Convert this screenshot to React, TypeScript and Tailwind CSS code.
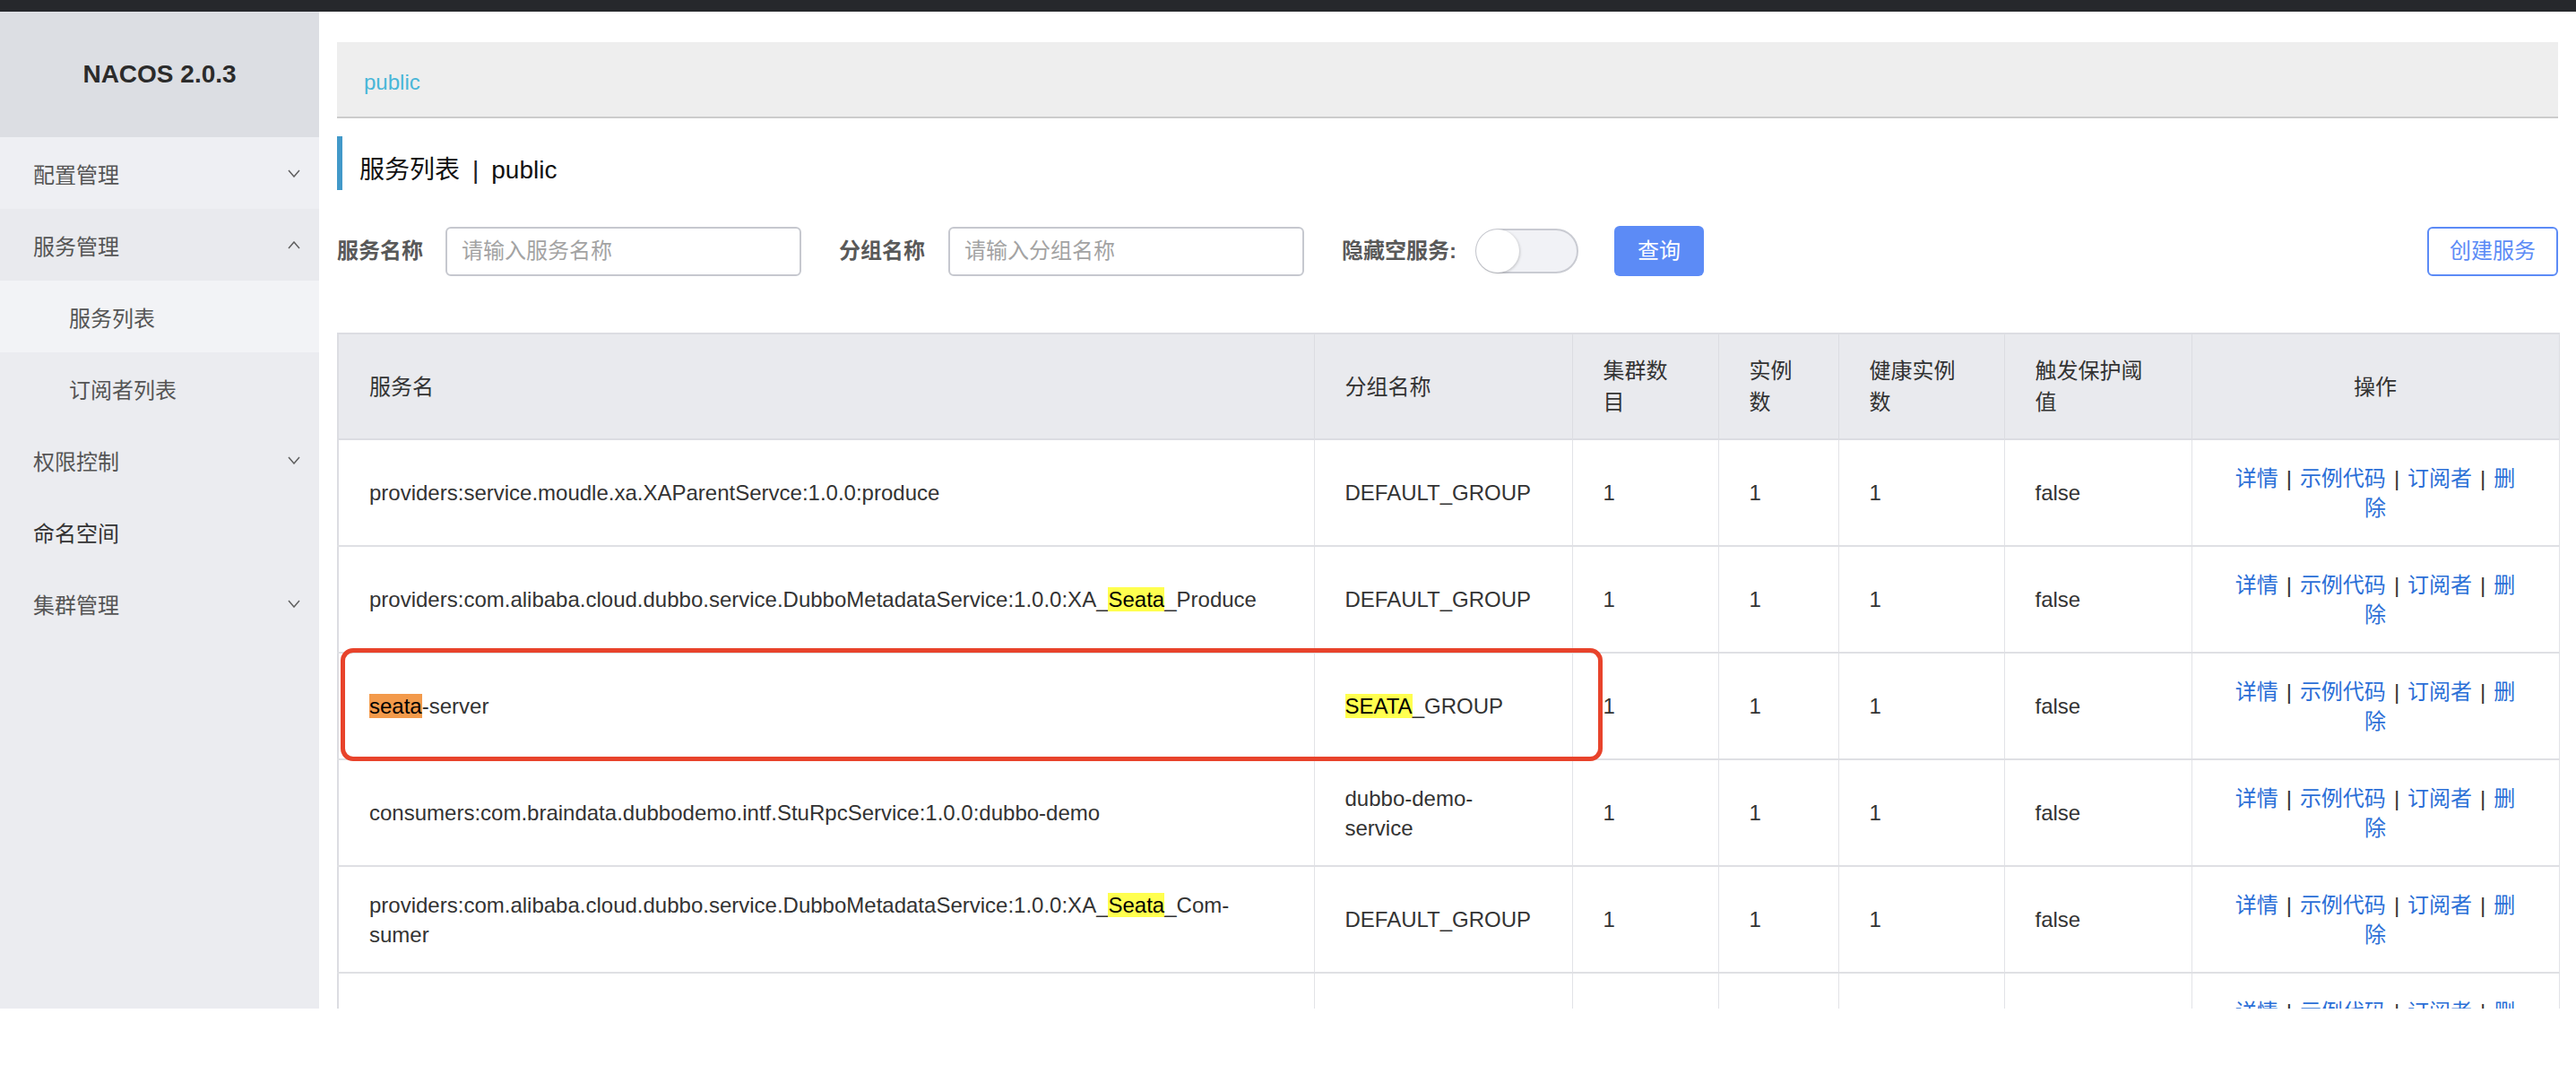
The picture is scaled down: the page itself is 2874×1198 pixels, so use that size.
import React from "react";

type Row = {
  name: React.ReactNode;
  group: React.ReactNode;
  cells?: boolean;
};

const rows: Row[] = [
  {
    name: "providers:service.moudle.xa.XAParentServce:1.0.0:produce",
    group: "DEFAULT_GROUP",
  },
  {
    name: (
      <>
        providers:com.alibaba.cloud.dubbo.service.DubboMetadataService:1.0.0:XA_
        <span className="bg-[#ffff4f] text-black">Seata</span>_Produce
      </>
    ),
    group: "DEFAULT_GROUP",
  },
  {
    name: (
      <>
        <span className="bg-[#f39a4b] text-black">seata</span>-server
      </>
    ),
    group: (
      <>
        <span className="bg-[#ffff4f] text-black">SEATA</span>_GROUP
      </>
    ),
  },
  {
    name: "consumers:com.braindata.dubbodemo.intf.StuRpcService:1.0.0:dubbo-demo",
    group: (
      <>
        dubbo-demo-
        <br />
        service
      </>
    ),
  },
  {
    name: (
      <>
        providers:com.alibaba.cloud.dubbo.service.DubboMetadataService:1.0.0:XA_
        <span className="bg-[#ffff4f] text-black">Seata</span>_Com-
        <br />
        sumer
      </>
    ),
    group: "DEFAULT_GROUP",
  },
  // last row is cut by the window, only its links peek out
  { name: "", group: "", cells: false },
];

function Chevron({ up }: { up?: boolean }) {
  return (
    <svg width="14" height="9" viewBox="0 0 14 9" className="shrink-0">
      <polyline
        points={up ? "1,8 7,1 13,8" : "1,1 7,8 13,1"}
        fill="none"
        stroke="#5f5f5f"
        strokeWidth="1.5"
      />
    </svg>
  );
}

function MenuItem({
  label,
  bg,
  chevron,
  sub,
  dark,
}: {
  label: string;
  bg?: string;
  chevron?: "up" | "down";
  sub?: boolean;
  dark?: boolean;
}) {
  return (
    <div
      className={`h-[80px] flex items-center justify-between pr-[21px] ${
        sub ? "pl-[77px]" : "pl-[37px]"
      } ${bg ?? ""}`}
    >
      <span
        className={`text-[24px] pt-[5px] ${dark ? "text-[#333]" : "text-[#555]"}`}
      >
        {label}
      </span>
      {chevron && <Chevron up={chevron === "up"} />}
    </div>
  );
}

function Sep() {
  return <span className="mx-[9px] text-[#333]">|</span>;
}

function App() {
  const th =
    "px-[34px] text-left font-normal text-[24px] leading-[35px] text-[#333] bg-[#e9eaee] border-r border-r-[#dcdde2] border-b-2 border-b-[#dcdde2] align-middle";
  const td =
    "px-[34px] text-[24px] leading-[33px] text-[#333] border-r border-r-[#e2e3e7] border-b-2 border-b-[#dfe0e4] align-middle";

  return (
    <div className="w-[2874px] h-[1198px] bg-white font-['Liberation_Sans','Noto_Sans_CJK_SC',sans-serif]">
      <div className="h-[13px] bg-[#26282c]" />
      <div className="h-[1112px] flex overflow-hidden">
        <aside className="w-[356px] shrink-0 bg-[#ebecf0] flex flex-col">
          <div className="h-[140px] bg-[#dcdee3] flex items-center justify-center text-[28px] font-bold text-[#2b2b2b]">
            NACOS 2.0.3
          </div>
          <MenuItem label="配置管理" chevron="down" bg="bg-[#eeeff3]" />
          <MenuItem label="服务管理" chevron="up" bg="bg-[#e9eaee]" />
          <MenuItem label="服务列表" sub bg="bg-[#f2f3f6]" />
          <MenuItem label="订阅者列表" sub />
          <MenuItem label="权限控制" chevron="down" />
          <MenuItem label="命名空间" dark />
          <MenuItem label="集群管理" chevron="down" />
        </aside>

        <main className="flex-1 min-w-0 px-[20px] pt-[34px]">
          <div className="h-[85px] bg-[#eeeeee] border-b-2 border-[#cccccc] flex items-center pl-[30px] pt-[6px]">
            <span className="text-[24px] text-[#49b6d8]">public</span>
          </div>

          <div className="mt-[20px] h-[60px] border-l-[6px] border-[#4299c9] pl-[19px] pt-[16px] flex items-center text-[28px] text-[#111]">
            <span>服务列表</span>
            <span className="mx-[14px] text-[#222]">|</span>
            <span>public</span>
          </div>

          <div className="mt-[40px] h-[56px] flex items-center">
            <label className="text-[24px] font-bold text-[#595959] mr-[25px]">
              服务名称
            </label>
            <input
              placeholder="请输入服务名称"
              className="w-[397px] h-[55px] border-2 border-[#c6c8cf] rounded-[6px] pl-[16px] text-[24px] outline-none placeholder:text-[#a3a3a3]"
            />
            <label className="text-[24px] font-bold text-[#595959] ml-[42px] mr-[26px]">
              分组名称
            </label>
            <input
              placeholder="请输入分组名称"
              className="w-[397px] h-[55px] border-2 border-[#c6c8cf] rounded-[6px] pl-[16px] text-[24px] outline-none placeholder:text-[#a3a3a3]"
            />
            <label className="text-[24px] font-bold text-[#595959] ml-[42px] mr-[21px]">
              隐藏空服务:
            </label>
            <div className="w-[115px] h-[50px] rounded-full border-2 border-[#c9cbd2] bg-[#f1f2f6] relative">
              <div className="absolute left-[-1px] top-[-1px] w-[48px] h-[48px] rounded-full bg-white shadow-[1px_1px_3px_rgba(0,0,0,0.18)]" />
            </div>
            <button className="ml-[40px] w-[100px] h-[56px] rounded-[6px] bg-[#5c8bf6] text-white text-[24px]">
              查询
            </button>
            <div className="flex-1" />
            <button className="w-[146px] h-[55px] rounded-[6px] border-2 border-[#5c8bf6] bg-white text-[#5c8bf6] text-[24px]">
              创建服务
            </button>
          </div>

          <div className="relative mt-[63px]">
            <table className="w-[2478px] table-fixed border-collapse border-l-2 border-t-2 border-[#dcdde2]">
              <colgroup>
                <col className="w-[1089px]" />
                <col className="w-[288px]" />
                <col className="w-[163px]" />
                <col className="w-[134px]" />
                <col className="w-[185px]" />
                <col className="w-[209px]" />
                <col className="w-[410px]" />
              </colgroup>
              <thead>
                <tr className="h-[118px]">
                  <th className={th}>服务名</th>
                  <th className={th}>分组名称</th>
                  <th className={th}>集群数目</th>
                  <th className={th}>实例数</th>
                  <th className={th}>健康实例数</th>
                  <th className={th}>触发保护阈值</th>
                  <th className={`${th} !text-center`}>操作</th>
                </tr>
              </thead>
              <tbody>
                {rows.map((r, i) => {
                  const show = r.cells !== false;
                  return (
                    <tr key={i} className="h-[119px]">
                      <td className={td}>{r.name}</td>
                      <td className={td}>{r.group}</td>
                      <td className={td}>{show ? "1" : ""}</td>
                      <td className={td}>{show ? "1" : ""}</td>
                      <td className={td}>{show ? "1" : ""}</td>
                      <td className={td}>{show ? "false" : ""}</td>
                      <td className={`${td} text-center !text-[#2b6fd7]`}>
                        详情
                        <Sep />
                        示例代码
                        <Sep />
                        订阅者
                        <Sep />删
                        <br />除
                      </td>
                    </tr>
                  );
                })}
              </tbody>
            </table>
            <div className="absolute left-[4px] top-[352px] w-[1408px] h-[126px] border-[5px] border-[#e8432b] rounded-[14px] pointer-events-none" />
          </div>
        </main>
      </div>
    </div>
  );
}

export default App;
